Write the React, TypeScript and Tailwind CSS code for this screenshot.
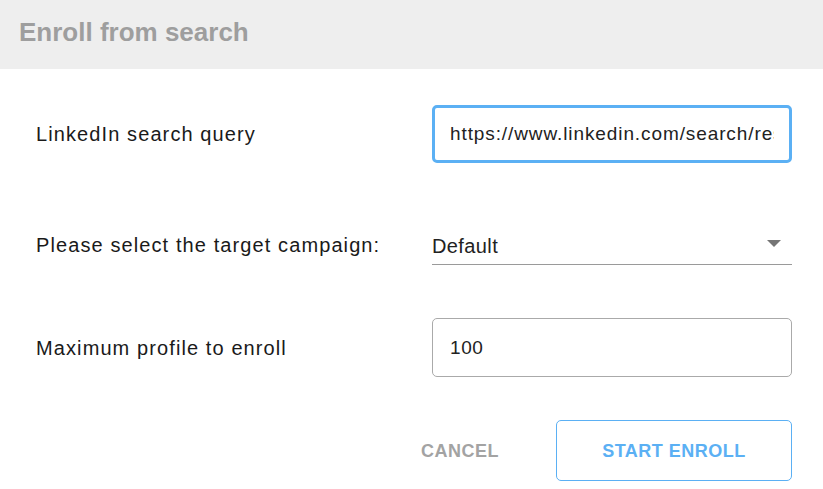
import { useState } from "react";

const font = "font-['Liberation_Sans',Arial,sans-serif]";

function FieldRow(props: { label: string; children: React.ReactNode; className?: string }) {
  return (
    <div className={`flex items-center ${props.className ?? ""}`}>
      <label className="w-[396px] shrink-0 text-[20px] tracking-[1.1px] text-[#1a1a1a]">
        {props.label}
      </label>
      <div className="w-[360px]">{props.children}</div>
    </div>
  );
}

export default function App() {
  const [query, setQuery] = useState("https://www.linkedin.com/search/results/people/");
  const [campaign, setCampaign] = useState("Default");
  const [max, setMax] = useState("100");

  return (
    <div className={`w-[823px] h-[489px] bg-white overflow-hidden ${font}`}>
      <div className="h-[69px] bg-[#eeeeee] flex items-center px-[19px] pb-[6px]">
        <h2 className="text-[26px] font-bold text-[#9e9e9e] leading-none">Enroll from search</h2>
      </div>

      <form className="flex flex-col pl-[36px] pt-[36px]" onSubmit={(e) => e.preventDefault()}>
        <FieldRow label="LinkedIn search query">
          <input
            value={query}
            onChange={(e) => setQuery(e.target.value)}
            className="w-full h-[58px] rounded-[5px] border-[3px] border-[#5bb0f4] px-[15px] text-[19px] tracking-[0.9px] text-[#222] outline-none"
          />
        </FieldRow>

        <FieldRow label="Please select the target campaign:" className="mt-[62px]">
          <div className="relative h-[40px] border-b border-[#9a9a9a] flex items-center">
            <select
              value={campaign}
              onChange={(e) => setCampaign(e.target.value)}
              className="appearance-none w-full h-full bg-transparent text-[20px] tracking-[0.4px] text-[#222] outline-none pt-[2px]"
            >
              <option>Default</option>
            </select>
            <svg
              className="absolute right-[11px] top-[15px] pointer-events-none"
              width="14"
              height="7"
              viewBox="0 0 14 7"
            >
              <path d="M0 0h14L7 7z" fill="#757575" />
            </svg>
          </div>
        </FieldRow>

        <FieldRow label="Maximum profile to enroll" className="mt-[53px]">
          <input
            value={max}
            onChange={(e) => setMax(e.target.value)}
            className="w-full h-[59px] rounded-[5px] border border-[#aaaaaa] px-[17px] text-[19px] tracking-[0.6px] text-[#222] outline-none"
          />
        </FieldRow>

        <div className="flex justify-end items-center gap-[46px] mt-[43px] pr-[31px]">
          <button type="button" className="px-[11px] text-[18px] font-bold tracking-[0.5px] text-[#a3a3a3] pt-[2px]">
            CANCEL
          </button>
          <button
            type="submit"
            className="w-[236px] h-[61px] rounded-[5px] border border-[#5bb0f4] text-[18px] font-bold tracking-[0.5px] text-[#5bb0f4] pt-[2px]"
          >
            START ENROLL
          </button>
        </div>
      </form>
    </div>
  );
}
